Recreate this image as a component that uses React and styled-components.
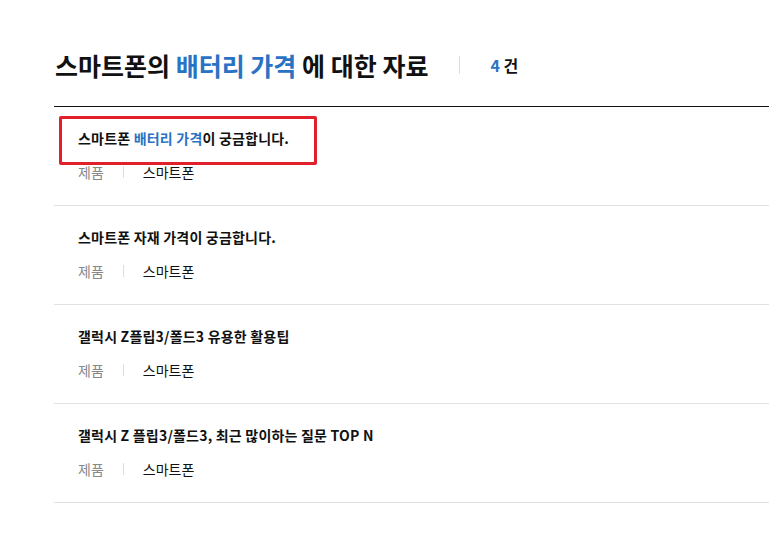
import React from "react";
import styled, { createGlobalStyle } from "styled-components";

const GlobalStyle = createGlobalStyle`
  body {
    margin: 0;
    background: #fff;
    font-family: "Noto Sans CJK KR", "Noto Sans", sans-serif;
    color: #111;
  }
`;

const items = [
  { title: ["스마트폰 ", { hl: "배터리 가격" }, "이 궁금합니다."], cat: "제품", value: "스마트폰", marked: true },
  { title: ["스마트폰 자재 가격이 궁금합니다."], cat: "제품", value: "스마트폰" },
  { title: ["갤럭시 Z플립3/폴드3 유용한 활용팁"], cat: "제품", value: "스마트폰" },
  { title: ["갤럭시 Z 플립3/폴드3, 최근 많이하는 질문 TOP N"], cat: "제품", value: "스마트폰" },
];

function App() {
  return (
    <>
      <GlobalStyle />
      <Page>
        <Header>
          <Title>
            스마트폰의 <Blue>배터리 가격</Blue> 에 대한 자료
          </Title>
          <Divider />
          <Count>
            <Blue>4</Blue> 건
          </Count>
        </Header>
        <List>
          {items.map((item, i) => (
            <Row key={i}>
              {item.marked && <Marker />}
              <ItemTitle>
                {item.title.map((part, j) =>
                  typeof part === "string" ? part : <ItemBlue key={j}>{part.hl}</ItemBlue>
                )}
              </ItemTitle>
              <Meta>
                <Cat>{item.cat}</Cat>
                <MetaSep />
                <Value>{item.value}</Value>
              </Meta>
            </Row>
          ))}
        </List>
      </Page>
    </>
  );
}

const Page = styled.div`
  padding-left: 54px;
`;

const Header = styled.div`
  display: flex;
  align-items: center;
  padding: 48px 0 24px 1px;
  border-bottom: 1px solid #111;
`;

const Title = styled.h2`
  margin: 0;
  font-size: 25px;
  line-height: 34px;
  font-weight: 700;
  color: #111;
`;

const Blue = styled.span`
  color: #2a72c4;
`;

const Divider = styled.span`
  width: 1px;
  height: 18px;
  background: #ddd;
  margin: 0 30px 0 31px;
`;

const Count = styled.span`
  font-size: 16px;
  font-weight: 700;
`;

const List = styled.ul`
  list-style: none;
  margin: 0;
  padding: 0;
`;

const Row = styled.li`
  position: relative;
  padding: 21px 0 23px 24px;
  border-bottom: 1px solid #e2e2e2;
`;

const Marker = styled.span`
  position: absolute;
  left: 5px;
  top: 9px;
  width: 258px;
  height: 49px;
  box-sizing: border-box;
  border: 3px solid #e0202a;
  border-radius: 2px;
`;

const ItemTitle = styled.div`
  font-size: 14px;
  line-height: 20px;
  font-weight: 600;
  letter-spacing: 0.2px;
  color: #111;
`;

const ItemBlue = styled.span`
  color: #2a72c4;
`;

const Meta = styled.div`
  display: flex;
  align-items: center;
  margin-top: 14px;
  font-size: 14px;
  line-height: 20px;
`;

const Cat = styled.span`
  color: #888;
`;

const MetaSep = styled.span`
  width: 1px;
  height: 12px;
  background: #ddd;
  margin: 0 19px 0 19px;
`;

const Value = styled.span`
  color: #111;
`;

export default App;
